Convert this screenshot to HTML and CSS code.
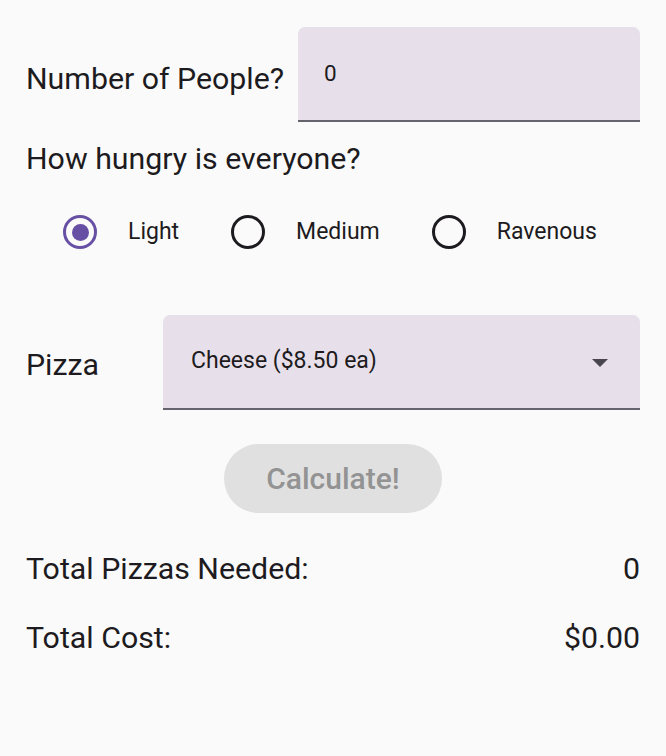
FILE: index.html
```html
<!DOCTYPE html>
<html lang="en">
<head>
<meta charset="utf-8">
<title>Pizza Party</title>
<link rel="stylesheet" href="styles.css">
</head>
<body>
<main class="screen">
  <div class="row people-row">
    <span class="label">Number of People?</span>
    <div class="field input-field"><span class="field-text">0</span></div>
  </div>

  <p class="question">How hungry is everyone?</p>

  <div class="radios">
    <div class="radio checked"><span class="ring"><span class="dot"></span></span><span class="radio-label">Light</span></div>
    <div class="radio"><span class="ring"></span><span class="radio-label">Medium</span></div>
    <div class="radio"><span class="ring"></span><span class="radio-label">Ravenous</span></div>
  </div>

  <div class="row pizza-row">
    <span class="label pizza-label">Pizza</span>
    <div class="field select-field">
      <span class="select-text">Cheese ($8.50 ea)</span>
      <svg class="arrow" width="16" height="8" viewBox="0 0 16 8"><path d="M0 0 L16 0 L8 8 Z" fill="#49454f"/></svg>
    </div>
  </div>

  <div class="button-wrap">
    <button class="calc" disabled>Calculate!</button>
  </div>

  <div class="total first">
    <span>Total Pizzas Needed:</span>
    <span>0</span>
  </div>
  <div class="total">
    <span>Total Cost:</span>
    <span>$0.00</span>
  </div>
</main>
</body>
</html>
```

FILE: styles.css
```css
* { box-sizing: border-box; }

html, body {
  margin: 0;
  padding: 0;
  background: #fafafa;
}

body {
  font-family: Roboto, "Noto Sans", "Liberation Sans", sans-serif;
  color: #1d1b20;
}

.screen {
  padding: 27px 26px 0 26px;
}

.row {
  display: flex;
  align-items: flex-start;
}

.label {
  font-size: 30.3px;
  line-height: 36px;
  flex: none;
}

.people-row {
  gap: 14px;
}

.people-row .label {
  margin-top: 34px;
}

.field {
  flex: 1;
  height: 95px;
  background: #e7e0eb;
  border-bottom: 2px solid #67636c;
  border-radius: 7px 7px 0 0;
}

.input-field {
  padding: 33px 0 0 26px;
}

.field-text {
  display: block;
  font-size: 22.5px;
  line-height: 26px;
  color: #1d1b20;
}

.question {
  margin: 19px 0 0 0;
  font-size: 30.3px;
  line-height: 36px;
}

.radios {
  display: flex;
  align-items: center;
  gap: 52px;
  margin-top: 38px;
  padding-left: 37px;
  height: 34px;
}

.radio {
  display: flex;
  align-items: center;
  gap: 31px;
}

.ring {
  width: 34px;
  height: 34px;
  border-radius: 50%;
  border: 3.5px solid #1d1b20;
  display: flex;
  align-items: center;
  justify-content: center;
}

.radio.checked .ring {
  border-color: #6750a4;
}

.dot {
  width: 17px;
  height: 17px;
  border-radius: 50%;
  background: #6750a4;
}

.radio-label {
  font-size: 23px;
  line-height: 34px;
}

.pizza-row {
  margin-top: 66px;
}

.pizza-label {
  width: 137px;
  margin-top: 32px;
}

.select-field {
  display: flex;
  justify-content: space-between;
  align-items: flex-start;
  padding: 32px 32px 0 28px;
}

.select-text {
  font-size: 23px;
  line-height: 27px;
  color: #1d1b20;
}

.arrow {
  margin-top: 12px;
  flex: none;
}

.button-wrap {
  display: flex;
  justify-content: center;
  margin-top: 34px;
}

.calc {
  width: 218px;
  height: 69px;
  border: none;
  border-radius: 35px;
  background: #e0e0e0;
  color: #939393;
  font-family: Roboto, "Noto Sans", "Liberation Sans", sans-serif;
  font-weight: 500;
  font-size: 30px;
  padding: 0;
}

.total {
  display: flex;
  justify-content: space-between;
  font-size: 30.3px;
  line-height: 36px;
  margin-top: 33px;
}

.total.first {
  margin-top: 38px;
}
```
